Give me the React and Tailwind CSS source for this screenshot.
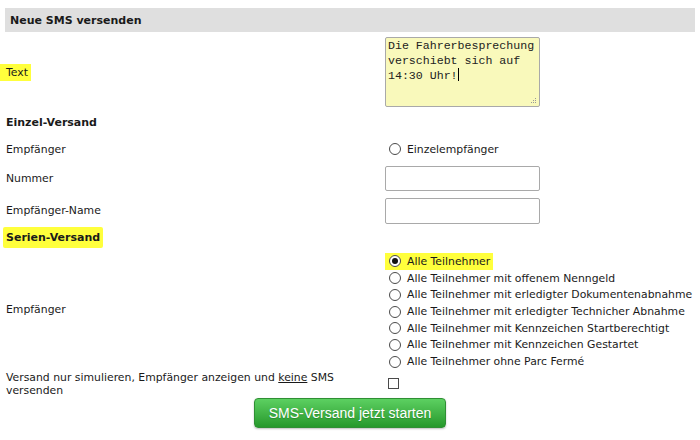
import React from 'react';

const radios = [
    'Alle Teilnehmer',
    'Alle Teilnehmer mit offenem Nenngeld',
    'Alle Teilnehmer mit erledigter Dokumentenabnahme',
    'Alle Teilnehmer mit erledigter Technicher Abnahme',
    'Alle Teilnehmer mit Kennzeichen Startberechtigt',
    'Alle Teilnehmer mit Kennzeichen Gestartet',
    'Alle Teilnehmer ohne Parc Fermé',
];

const Radio = ({ checked }) => (
    <span className="inline-flex items-center justify-center w-[12px] h-[12px] rounded-full border border-[#4a4a4a] bg-white shrink-0">
        {checked && <span className="w-[6px] h-[6px] rounded-full bg-[#111]" />}
    </span>
);

const Row = ({ label, className = '', children }) => (
    <div className={`grid grid-cols-[385px_1fr] items-center ${className}`}>
        <div className="pl-[6px]">{label}</div>
        <div>{children}</div>
    </div>
);

const App = () => {
    return (
        <div
            className="w-[700px] h-[440px] bg-white text-[#1a1a1a] text-[10.85px] leading-[13px] overflow-hidden"
            style={{ fontFamily: '"DejaVu Sans", Verdana, sans-serif' }}
        >
            <div className="mt-2 mx-[5px] h-6 bg-[#dfdfdf] flex items-center pl-[5px] font-bold text-[11px]">
                Neue SMS versenden
            </div>

            <div className="grid grid-cols-[385px_1fr] items-center mt-[5px] h-[70px]">
                <div>
                    <span className="bg-[#ffff3c] pl-[6px] pr-[3px] py-[2px]">Text</span>
                </div>
                <div className="relative w-[155px] h-[70px] border border-[#a9a9a9] rounded-[2px] bg-[#f9f9bb] px-[2px] pt-[1px] text-[11.6px] leading-[14.5px] text-[#222]"
                    style={{ fontFamily: '"Liberation Mono", "Courier New", monospace' }}
                >
                    Die Fahrerbesprechung verschiebt sich auf 14:30 Uhr!<span className="inline-block w-px h-[13px] bg-black align-[-2px]" />
                    <svg className="absolute right-[2px] bottom-[2px]" width="7" height="7" viewBox="0 0 7 7">
                        <rect x="5" y="1" width="1" height="1" fill="#999" />
                        <rect x="5" y="3" width="1" height="1" fill="#999" />
                        <rect x="3" y="3" width="1" height="1" fill="#999" />
                        <rect x="5" y="5" width="1" height="1" fill="#999" />
                        <rect x="3" y="5" width="1" height="1" fill="#999" />
                        <rect x="1" y="5" width="1" height="1" fill="#999" />
                    </svg>
                </div>
            </div>

            <div className="h-[30px] flex items-center pl-[6px] font-bold text-[11px]">Einzel-Versand</div>

            <Row label="Empfänger" className="h-6">
                <label className="flex items-center gap-[6px] pl-[4px]">
                    <Radio />
                    <span>Einzelempfänger</span>
                </label>
            </Row>

            <Row label="Nummer" className="h-[35px]">
                <div className="w-[155px] h-[25px] border border-[#a9a9a9] rounded-[2px] bg-white" />
            </Row>

            <Row label="Empfänger-Name" className="h-[29px]">
                <div className="w-[155px] h-[26px] border border-[#a9a9a9] rounded-[2px] bg-white" />
            </Row>

            <div className="h-6 flex items-center font-bold text-[11px]">
                <span className="bg-[#ffff3c] ml-[3px] px-[3px] py-[4px] rounded-[2px]">Serien-Versand</span>
            </div>

            <Row label="Empfänger" className="h-[121px]">
                <div className="flex flex-col pt-[4px]">
                    {radios.map((r, i) => (
                        <label key={r} className="h-[16.7px] flex items-center">
                            <span className={`flex items-center gap-[6px] pl-[4px] pr-[3px] h-[17px] ${i === 0 ? 'bg-[#ffff3c]' : ''}`}>
                                <Radio checked={i === 0} />
                                <span>{r}</span>
                            </span>
                        </label>
                    ))}
                </div>
            </Row>

            <Row
                label={
                    <span>
                        Versand nur simulieren, Empfänger anzeigen und <u>keine</u> SMS versenden
                    </span>
                }
                className="h-[27px]"
            >
                <span className="block ml-[3px] w-[11px] h-[11px] border border-[#4a4a4a] bg-white" />
            </Row>

            <div className="flex justify-center mt-px">
                <button
                    className="w-[192px] h-[30px] rounded-[4px] border border-[#2f8f34] bg-gradient-to-b from-[#5cd061] to-[#25992b] text-white text-[14px] shadow-[0_1px_2px_rgba(0,0,0,0.25)]"
                    style={{ fontFamily: '"Liberation Sans", Arial, sans-serif', textShadow: '0 1px 1px rgba(0,0,0,0.2)' }}
                >
                    SMS-Versand jetzt starten
                </button>
            </div>
        </div>
    );
};

export default App;
